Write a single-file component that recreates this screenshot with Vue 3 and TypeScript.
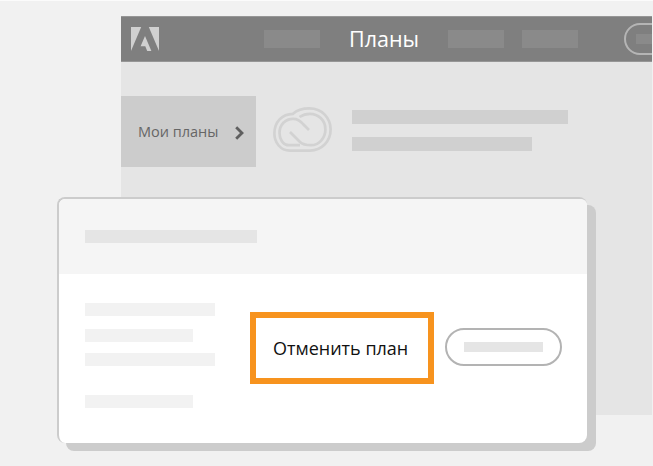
<script setup lang="ts">
const leftLines: { w: number; gap: number }[] = [
  { w: 130, gap: 0 },
  { w: 108, gap: 13 },
  { w: 130, gap: 11 },
  { w: 108, gap: 29 },
];
</script>

<template>
  <div class="page">
    <div class="window">
      <header class="topbar">
        <svg class="adobe" viewBox="0 0 28 24" aria-label="Adobe">
          <path d="M0 0H10.2L0 24Z M17.8 0H28V24Z M14 9L20.4 24H16.2L14.3 19.2H9.6Z" fill="#d0d0d0" />
        </svg>
        <span class="nav-block first"></span>
        <span class="title">Планы</span>
        <span class="nav-block second"></span>
        <span class="nav-block third"></span>
        <span class="top-pill"><i></i></span>
      </header>
      <div class="plan-row">
        <div class="tab">
          <span>Мои планы</span>
          <svg class="chev" viewBox="0 0 9 14"><path d="M1.200 1.200L7 7L1.200 12.800" fill="none" stroke="#5f5f5f" stroke-width="2.800" /></svg>
        </div>
        <svg class="cloud" viewBox="0 0 59 45">
          <g fill="none" stroke="#d2d2d2" stroke-width="2.700">
            <path d="M17 43.600C7 43.600 1.400 35 1.400 26.500C1.400 15 9 7 20 6.800C24 3 30 1.400 36.500 1.400C49 1.400 57.600 11 57.600 22.500C57.600 34.500 48.500 43.600 37 43.600Z" />
            <path d="M27 38.200H16C10 38.200 6.500 32 6.500 26C6.500 17.500 12.500 11.800 20 11.800C24.500 11.800 27.500 13.800 30 17L36 23" />
            <path d="M17 25L27 35C30 38 33 38.200 38 38.200C46 38.200 52.400 31 52.400 22.500C52.400 13 45 6.800 37 6.800C33 6.800 29.500 8 26.500 10" />
          </g>
        </svg>
        <div class="plan-bars">
          <span class="bar one"></span>
          <span class="bar two"></span>
        </div>
      </div>
    </div>

    <section class="card">
      <div class="card-head"><span></span></div>
      <div class="card-body">
        <div class="lines">
          <span
            v-for="(line, i) in leftLines"
            :key="i"
            :style="{ width: line.w + 'px', marginTop: line.gap + 'px' }"
          ></span>
        </div>
        <div class="cancel">Отменить план</div>
        <div class="pill"><i></i></div>
      </div>
    </section>
  </div>
</template>

<style>
html,
body {
  margin: 0;
  background: #f1f1f1;
}
</style>

<style scoped>
.page {
  position: relative;
  width: 653px;
  height: 466px;
  overflow: hidden;
  box-sizing: border-box;
  padding: 16px 1px 0 121px;
  background: #f1f1f1;
  border-top: 1px solid #fbfbfb;
  font-family: "Open Sans", "Noto Sans", sans-serif;
}
.window {
  height: 399px;
  margin-top: -1px;
  background: #e5e5e5;
}
.topbar {
  display: flex;
  align-items: center;
  height: 46px;
  box-sizing: border-box;
  background: #7f7f7f;
  border-top: 1px solid #969696;
  border-bottom: 1px solid #969696;
  padding-left: 10px;
  overflow: hidden;
}
.adobe {
  width: 28px;
  height: 24px;
  flex: none;
}
.nav-block {
  width: 56px;
  height: 18px;
  flex: none;
  background: #8a8a8a;
}
.first {
  margin-left: 105px;
}
.title {
  width: 128px;
  flex: none;
  text-align: center;
  color: #fff;
  font-size: 21.500px;
  line-height: 24px;
}
.third {
  margin-left: 18px;
}
.top-pill {
  display: flex;
  align-items: center;
  flex: none;
  box-sizing: border-box;
  width: 60px;
  height: 32px;
  margin-left: 46px;
  padding-left: 10px;
  border: 2px solid #b5b5b5;
  border-radius: 16px;
}
.top-pill i {
  width: 40px;
  height: 10px;
  background: #8a8a8a;
}
.plan-row {
  display: flex;
  align-items: flex-start;
  padding-top: 34px;
}
.tab {
  display: flex;
  align-items: center;
  width: 135px;
  height: 71px;
  box-sizing: border-box;
  padding-left: 17px;
  background: #cccccc;
  color: #666;
  font-size: 14.500px;
}
.chev {
  width: 9px;
  height: 14px;
  margin-left: 17px;
  margin-top: 3px;
}
.cloud {
  width: 59px;
  height: 45px;
  margin: 11px 0 0 17px;
}
.plan-bars {
  display: flex;
  flex-direction: column;
  gap: 13px;
  margin: 14px 0 0 20px;
}
.bar {
  display: block;
  height: 14px;
  background: #d0d0d0;
}
.one {
  width: 216px;
}
.two {
  width: 180px;
}
.card {
  position: absolute;
  left: 57px;
  top: 196px;
  width: 530px;
  height: 246px;
  box-sizing: border-box;
  display: flex;
  flex-direction: column;
  background: #fff;
  border-top: 2px solid #cccccc;
  border-left: 2px solid #cccccc;
  border-radius: 8px;
  box-shadow: 9px 8px 0 #cccccc;
  overflow: visible;
}
.card-head {
  height: 75px;
  flex: none;
  box-sizing: border-box;
  padding: 31px 0 0 26px;
  background: #f5f5f5;
  border-radius: 6px 6px 0 0;
}
.card-head span {
  display: block;
  width: 172px;
  height: 13px;
  background: #e5e5e5;
}
.card-body {
  position: relative;
  flex: 1;
  display: flex;
  align-items: flex-start;
  padding: 29px 0 0 26px;
}
.lines {
  display: flex;
  flex-direction: column;
  width: 130px;
}
.lines span {
  display: block;
  height: 13px;
  background: #f2f2f2;
}
.cancel {
  box-sizing: border-box;
  width: 184px;
  height: 72px;
  margin: 9px 0 0 35px;
  padding-left: 17px;
  border: 6px solid #f7931e;
  color: #111;
  font-size: 18px;
  line-height: 60px;
  white-space: nowrap;
}
.pill {
  display: flex;
  align-items: center;
  justify-content: center;
  box-sizing: border-box;
  width: 117px;
  height: 38px;
  margin: 25px 0 0 11px;
  border: 2px solid #b3b3b3;
  border-radius: 19px;
}
.pill i {
  width: 79px;
  height: 10px;
  background: #e5e5e5;
}
</style>
